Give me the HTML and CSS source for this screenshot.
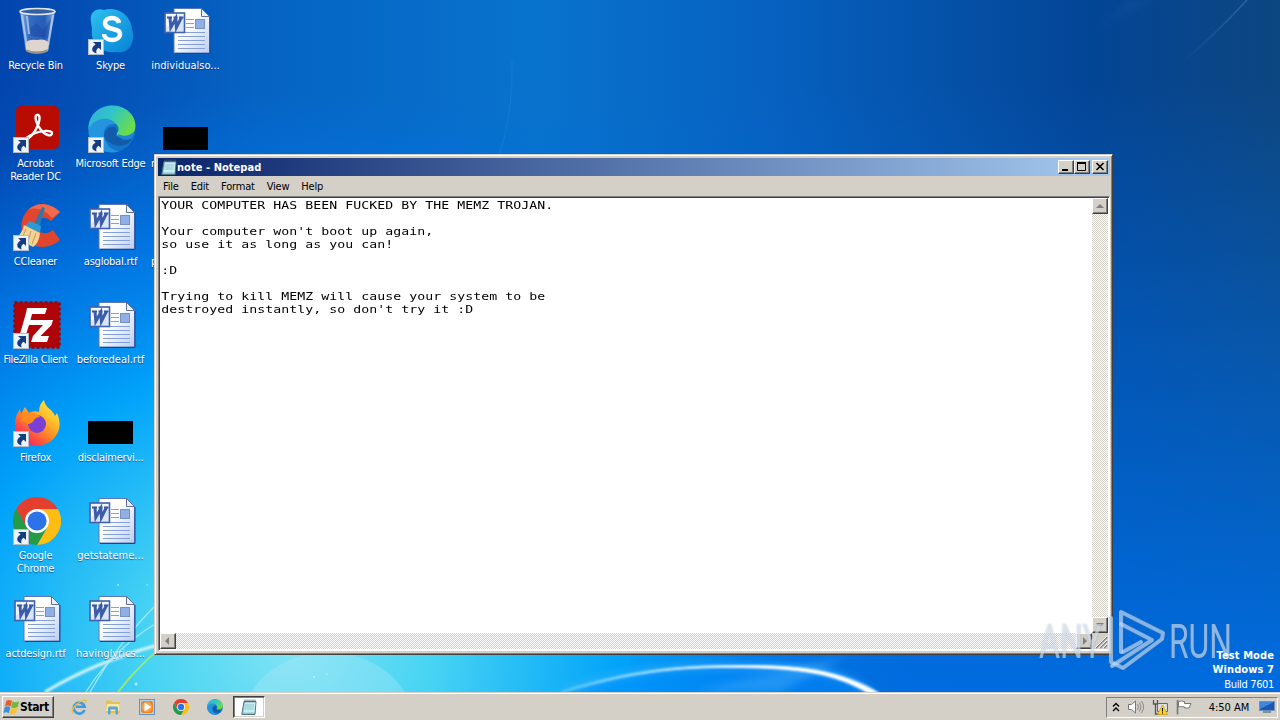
FILE: index.html
```html
<!DOCTYPE html>
<html lang="en">
<head>
    <meta charset="UTF-8">
    <meta name="viewport" content="width=device-width, initial-scale=1.0">
    <title>Desktop</title>
    <link rel="stylesheet" href="styles.css">
</head>
<body>
    <!-- Shared icons -->
    <svg class="defs">
        <defs>
            <linearGradient id="paper" x1="0" y1="0" x2="1" y2="1">
                <stop offset=".4" stop-color="#fff"/><stop offset="1" stop-color="#b9cdf3"/>
            </linearGradient>
            <linearGradient id="skypeFill" x1="0" y1="0" x2="1" y2="1">
                <stop offset="0" stop-color="#2fc0ef"/><stop offset="1" stop-color="#0582d6"/>
            </linearGradient>
            <linearGradient id="edgeTop" x1="0" y1="0" x2="1" y2=".5">
                <stop offset="0" stop-color="#35a9e0"/><stop offset=".5" stop-color="#2fc6c6"/><stop offset="1" stop-color="#6bdc4a"/>
            </linearGradient>
            <linearGradient id="foxFill" x1="1" y1="0" x2=".2" y2="1">
                <stop offset="0" stop-color="#fff04a"/><stop offset=".35" stop-color="#ffc22c"/><stop offset=".58" stop-color="#ff8a24"/><stop offset=".85" stop-color="#ff3d4c"/><stop offset="1" stop-color="#e31587"/>
            </linearGradient>
            <linearGradient id="bin" x1="0" y1="0" x2="1" y2="0">
                <stop offset="0" stop-color="#a9c6ec"/><stop offset=".25" stop-color="#3c74c4"/><stop offset=".7" stop-color="#2b5fb8"/><stop offset="1" stop-color="#9ebce6"/>
            </linearGradient>
        </defs>
        <symbol id="shortcut" viewBox="0 0 16 16">
            <rect x=".5" y=".5" width="15" height="15" fill="#edf3fa" stroke="#b3bdca"/>
            <path d="M5 3h8v8l-2.300-2.300C8.500 10 7.800 11.500 8.500 14.500 3.500 13.500 2.500 8.500 7.600 5.600z" fill="#153d80"/>
        </symbol>
        <symbol id="word" viewBox="0 0 48 48">
            <path d="M11 1.500h27.500l8 8V46H11z" fill="url(#paper)" stroke="#5b78b5"/>
            <path d="M47 10v36.500H12" fill="none" stroke="#20458f"/>
            <path d="M38.500 1.500v8h8z" fill="#eaf0fb" stroke="#5f7196"/>
            <path d="M23 12.500h8M23 16.500h8M23 20.500h8M15 25.500h27M15 29.500h27M15 33.500h27M15 37.500h27M15 41.500h27" stroke="#86a0d2"/>
            <rect x="32.500" y="12.500" width="9" height="9" fill="#8fb0e6" stroke="#7790bd"/>
            <rect x="2" y="6" width="19.500" height="19.500" fill="#dbe5f9" stroke="#3f62ac" stroke-width="1.600"/>
            <path d="M3 7h17.500v5L3 20z" fill="#fff" opacity=".6"/>
            <path d="M4 10.500h5M10.500 10.500h4M16 10.500h4.500" stroke="#31529e" stroke-width="1.800"/>
            <path d="M7 10.500l.8 10 5-9 .6 9 5-10" fill="none" stroke="#3b5ca8" stroke-width="3"/>
        </symbol>
        <symbol id="chrome" viewBox="0 0 48 48">
            <path d="M3.200 12A24 24 0 0 1 44.800 12L24 12 13.600 30z" fill="#e43e2f"/>
            <path d="M44.800 12A24 24 0 0 1 24 48L34.400 30 24 12z" fill="#fdbd12"/>
            <path d="M24 48A24 24 0 0 1 3.200 12L13.600 30 34.400 30z" fill="#259b48"/>
            <circle cx="24" cy="24" r="12" fill="#fff"/>
            <circle cx="24" cy="24" r="9.600" fill="#2c72e8"/>
        </symbol>
        <symbol id="edge" viewBox="0 0 48 48">
            <circle cx="24" cy="24" r="23.500" fill="#1474cc"/>
            <path d="M.5 25C-.5 10 12 0 25 .5 39 1 47.500 11 47.500 20.500 47.500 28 42 32 36 32c-5 0-8-2-7-4 3-3 2-8-4-11C15 13 4 17 .5 25z" fill="url(#edgeTop)"/>
            <path d="M.5 25C4 13 22 10 28 19c-9-1-13 5-12 12 1 8 7 14 15 15.500C14 51 0 39 .5 25z" fill="#2494de"/>
            <path d="M16 31c1-6 5-10 11-9 2 2 2 4 1 7-1 5 10 5 17 0 1 1 .5 3-1 5-5 8-14 8-20 5-4-2-7-5-8-8z" fill="#115ba8"/>
            <path d="M30 29c6 3 11 2 16-2 0 3-1 5-3 7-7 2-12 0-13-5z" fill="#1e82d8"/>
        </symbol>
        <symbol id="notes" viewBox="0 0 16 16">
            <path d="M3 2.500h12l-1 13H.8z" fill="#8fc6d2" stroke="#4d7684"/>
            <path d="M4 3h10.500l-1 10.500H2.500z" fill="#c8eef2"/>
            <path d="M4 6h9M3.700 8h9M3.400 10h9" stroke="#79b4c1" stroke-width=".7"/>
            <path d="M4 .5v3M6 .5v3M8 .5v3M10 .5v3M12 .5v3M14 .5v3" stroke="#48626c" stroke-width=".9"/>
        </symbol>
    </svg>

    <main class="desktop">
        <!-- Wallpaper -->
        <svg class="wallpaper" viewBox="0 0 1280 692" preserveAspectRatio="none">
            <defs>
                <linearGradient id="base" gradientUnits="userSpaceOnUse" x1="0" y1="0" x2="1280" y2="0">
                    <stop offset="0" stop-color="#0345ae"/><stop offset=".2" stop-color="#0563c3"/><stop offset=".42" stop-color="#0873cd"/><stop offset=".6" stop-color="#0661c0"/><stop offset=".85" stop-color="#034596"/><stop offset="1" stop-color="#0d4680"/>
                </linearGradient>
                <linearGradient id="low" x1="0" y1="0" x2="0" y2="1">
                    <stop offset=".12" stop-color="#006cdf" stop-opacity="0"/><stop offset="1" stop-color="#006cdf"/>
                </linearGradient>
                <radialGradient id="glow" gradientUnits="userSpaceOnUse" cx="0" cy="0" r="1" gradientTransform="translate(290 650) scale(640 560)">
                    <stop offset="0" stop-color="#7fe3f5"/><stop offset=".22" stop-color="#48d4f3"/><stop offset=".52" stop-color="#00a2fa"/><stop offset=".75" stop-color="#0080ee" stop-opacity=".7"/><stop offset="1" stop-color="#006fdd" stop-opacity="0"/>
                </radialGradient>
                <linearGradient id="arc"><stop offset="0" stop-color="#54c6ff"/><stop offset=".6" stop-color="#fff"/></linearGradient>
                <linearGradient id="ray" x1="0" y1="1" x2="1" y2="0"><stop offset="0" stop-color="#6fb4ea" stop-opacity="0"/><stop offset="1" stop-color="#6fb4ea" stop-opacity=".3"/></linearGradient>
                <filter id="soft"><feGaussianBlur stdDeviation=".8"/></filter>
                <filter id="softer" x="-20%" y="-40%" width="140%" height="180%"><feGaussianBlur stdDeviation="4"/></filter>
            </defs>
            <rect width="1280" height="692" fill="url(#base)"/>
            <rect width="1280" height="692" fill="url(#low)"/>
            <rect width="1280" height="692" fill="url(#glow)"/>
            <ellipse cx="328" cy="730" rx="88" ry="78" fill="#b9ecf7" opacity=".3"/>
            <path d="M560 692C700 650 830 650 878 692z" fill="#0089fa" opacity=".45"/>
            <path d="M690 692L850 655 780 692z" fill="#69c4ff" opacity=".3" filter="url(#softer)"/>
            <path d="M562 692C640 664 700 664 745 667 800 667 836 668 872 693" fill="none" stroke="#54beff" stroke-width="7" opacity=".4" filter="url(#softer)"/>
            <path d="M562 691C640 667 690 665.500 740 665.500 800 665 840 670 879 693h-11C834 673 800 668.500 740 667.500 690 667 640 669 562 693z" fill="url(#arc)" stroke="url(#arc)" stroke-width=".8" filter="url(#soft)"/>
            <path d="M45 692Q95 662 158 645" fill="none" stroke="#d4f6fd" stroke-width="3" filter="url(#soft)"/>
            <path d="M86 692Q112 650 158 622M90 692Q120 640 158 603" fill="none" stroke="#b4effb" stroke-width="1.300" opacity=".8"/>
            <path d="M118 692Q135 670 158 650" fill="none" stroke="#97ea70" stroke-width="2"/>
            <g fill="#c9f6fd" opacity=".8"><circle cx="118" cy="585" r="1"/><circle cx="147" cy="585" r=".8"/><circle cx="136" cy="684" r="1.500"/><circle cx="314" cy="677" r="1"/><circle cx="327" cy="674" r=".8"/></g>
            <path d="M1180 64Q1215 35 1247 0" fill="none" stroke="url(#ray)" stroke-width="1.500"/>
            <path d="M1068 53Q1105 20 1130 0h25Q1105 20 1068 53z" fill="url(#ray)" opacity=".3" filter="url(#softer)"/>
            <path d="M498 160Q514 110 512 60" fill="none" stroke="#3b95e0" opacity=".25"/>
        </svg>

        <!-- Desktop icons, filled column by column -->
        <div class="icons">
            <div class="icon">
                <svg viewBox="0 0 48 48">
                    <path d="M7 4L12.500 43Q24 49 35.500 43L42 4z" fill="url(#bin)" fill-opacity=".85"/>
                    <ellipse cx="24.500" cy="4.500" rx="17.500" ry="3" fill="#375e9e" stroke="#dfe7f2" stroke-width="1.600"/>
                    <path d="M9 8l5 32M14 9l2 18M40 8l-5 30" stroke="#c5d9f3" stroke-width="2" opacity=".7"/>
                    <path d="M17 21l7-5 6 7 8-12-3 20-17-2z" fill="#173f99" opacity=".4"/>
                    <path d="M12.500 36q3-4 11-3 9-2 12.500 3l-1 8q-11 4-22 0z" fill="#ddd5ce"/>
                    <path d="M12.500 42q11 5 22.500 0l-1 3q-10 4-20 0z" fill="#98918a"/>
                </svg>
                <span>Recycle Bin</span>
            </div>
            <div class="icon">
                <svg viewBox="0 0 48 48">
                    <rect x="3" y="1" width="43" height="43" rx="5" fill="#b80b02"/>
                    <path d="M12 35c4-1 10-7 13-15 3-8 1-11-1-10-3 1-1 9 4 15 5 6 11 7 11 3 0-3-10-3-19 1-7 3-10 7-8 7z" fill="none" stroke="#fff" stroke-width="2.400"/>
                    <use href="#shortcut" x="0" y="32" width="16" height="16"/>
                </svg>
                <span>Acrobat<br>Reader DC</span>
            </div>
            <div class="icon">
                <svg viewBox="0 0 48 48">
                    <path d="M47 9C37-1 23-1 15 7S6 30 14 38s23 8 33-1l-7-10c-7 6-16 3-17-4s8-12 15-5z" fill="#e2452e"/>
                    <path d="M47 9C37-1 23-1 15 7q12-5 24 8z" fill="#f16b4a"/>
                    <path d="M29 4l3 1-6 20-6-2z" fill="#2f78a8"/>
                    <path d="M17 18l11 5-1 7-15-7z" fill="#2b9bd7"/>
                    <path d="M11 22l16 8q-1 10-7 14-8-5-18-8 7-5 9-14z" fill="#f4d291"/>
                    <path d="M13 26l-4 9M18 28l-3 11M23 30l-4 11" stroke="#c99955"/>
                    <use href="#shortcut" x="0" y="32" width="16" height="16"/>
                </svg>
                <span>CCleaner</span>
            </div>
            <div class="icon">
                <svg viewBox="0 0 48 48">
                    <rect x="1.500" y="1.500" width="45" height="45" fill="#b00508" stroke="#a00205" stroke-width="2.500" stroke-dasharray="3 2"/>
                    <path d="M14 7h20l-2 6H19l-1.500 6H28l-2 5H16l-5 16H5L13 12z" fill="#fff"/>
                    <path d="M23 19h17l-1.500 5-11 11H36l-2 6H18l2-6 10-11h-8z" fill="#fff"/>
                    <use href="#shortcut" x="0" y="32" width="16" height="16"/>
                </svg>
                <span class="tight">FileZilla Client</span>
            </div>
            <div class="icon">
                <svg viewBox="0 0 48 48">
                    <path d="M24 46.500C10 46.500 2 36 2 25c0-7 3-12 5-15l1 5 4-7 4 6q5-3 10-1 0-8 5-12 1 6 7 10 2 2 4 6l2-3c3 7 4 14 0 21-4 7-11 11.500-20 11.500z" fill="url(#foxFill)"/>
                    <circle cx="24" cy="25" r="9" fill="#7b3fd6"/>
                    <path d="M13 14q9-2 14 4-4 0-6 3-1 3-6 4-4-4-8-2 2-5 6-9z" fill="#ff8c1e"/>
                    <use href="#shortcut" x="0" y="32" width="16" height="16"/>
                </svg>
                <span>Firefox</span>
            </div>
            <div class="icon">
                <svg viewBox="0 0 48 48">
                    <use href="#chrome"/>
                    <use href="#shortcut" x="0" y="32" width="16" height="16"/>
                </svg>
                <span>Google<br>Chrome</span>
            </div>
            <div class="icon">
                <svg viewBox="0 0 48 48"><use href="#word"/></svg>
                <span>actdesign.rtf</span>
            </div>

            <div class="icon">
                <svg viewBox="0 0 48 48">
                    <path d="M3 15C1 6 8 0 16 3c13-4 27 5 28 19 4 13-3 26-16 23C13 47 2 36 4 22z" fill="url(#skypeFill)"/>
                    <path d="M31 16c-1-4-4-5-7-5-4 0-7 2-7 5 0 8 15 4 15 11 0 4-4 6-8 6-5 0-8-3-8-6" fill="none" stroke="#fff" stroke-width="4.500"/>
                    <use href="#shortcut" x="0" y="32" width="16" height="16"/>
                </svg>
                <span>Skype</span>
            </div>
            <div class="icon">
                <svg viewBox="0 0 48 48">
                    <use href="#edge"/>
                    <use href="#shortcut" x="0" y="32" width="16" height="16"/>
                </svg>
                <span>Microsoft Edge</span>
            </div>
            <div class="icon">
                <svg viewBox="0 0 48 48"><use href="#word"/></svg>
                <span>asglobal.rtf</span>
            </div>
            <div class="icon">
                <svg viewBox="0 0 48 48"><use href="#word"/></svg>
                <span class="wide">beforedeal.rtf</span>
            </div>
            <div class="icon">
                <svg viewBox="0 0 48 48"><path d="M0 22h45v23H0z"/></svg>
                <span>disclaimervi...</span>
            </div>
            <div class="icon">
                <svg viewBox="0 0 48 48"><use href="#word"/></svg>
                <span class="wide">getstateme...</span>
            </div>
            <div class="icon">
                <svg viewBox="0 0 48 48"><use href="#word"/></svg>
                <span class="wide">havinglyrics...</span>
            </div>

            <div class="icon">
                <svg viewBox="0 0 48 48"><use href="#word"/></svg>
                <span class="wide">individualso...</span>
            </div>
            <div class="icon">
                <svg viewBox="0 0 48 48"><path d="M0 22h45v23H0z"/></svg>
                <span class="hidden-label">r</span>
            </div>
            <div class="icon">
                <svg viewBox="0 0 48 48"></svg>
                <span class="hidden-label">p</span>
            </div>
        </div>

        <!-- Notepad window -->
        <section class="window">
            <header class="titlebar">
                <svg class="app-icon" viewBox="0 0 16 16"><use href="#notes"/></svg>
                <span class="title">note - Notepad</span>
                <div class="controls">
                    <button class="bevel"><svg viewBox="0 0 12 10"><path d="M2 8h6" stroke="#000" stroke-width="2"/></svg></button>
                    <button class="bevel"><svg viewBox="0 0 12 10"><path d="M1.500 1.500h8v7h-8z" fill="none" stroke="#000"/><path d="M1 1h9" stroke="#000" stroke-width="2"/></svg></button>
                    <button class="bevel close"><svg viewBox="0 0 12 10"><path d="M2.500 1l7 7M9.500 1l-7 7" stroke="#000" stroke-width="1.600"/></svg></button>
                </div>
            </header>
            <nav class="menu">
                <span>File</span><span>Edit</span><span>Format</span><span>View</span><span>Help</span>
            </nav>
            <div class="client">
                <pre class="text">YOUR COMPUTER HAS BEEN FUCKED BY THE MEMZ TROJAN.

Your computer won't boot up again,
so use it as long as you can!

:D

Trying to kill MEMZ will cause your system to be
destroyed instantly, so don't try it :D</pre>
                <div class="scroll vertical">
                    <button class="bevel"><svg viewBox="0 0 12 12"><path d="M2 8h8L6 4z" fill="#808080"/></svg></button>
                    <button class="bevel"><svg viewBox="0 0 12 12"><path d="M2 4h8L6 8z" fill="#808080"/></svg></button>
                </div>
                <div class="scroll horizontal">
                    <button class="bevel"><svg viewBox="0 0 12 12"><path d="M7 2v8L3 6z" fill="#808080"/></svg></button>
                    <button class="bevel"><svg viewBox="0 0 12 12"><path d="M5 2v8l4-4z" fill="#808080"/></svg></button>
                </div>
                <svg class="grip" viewBox="0 0 16 16"><path d="M4 15L15 4M8 15l7-7M12 15l3-3" stroke="#808080" stroke-width="1.600"/><path d="M3 15L15 3M7 15l8-8M11 15l4-4" stroke="#fff" stroke-width=".8"/></svg>
            </div>
        </section>

        <!-- Overlay logo -->
        <svg class="watermark" viewBox="0 0 200 64">
            <g class="logo-text">
                <text x="3" y="50" textLength="63" lengthAdjust="spacingAndGlyphs">ANY</text>
                <text x="133" y="50" textLength="63" lengthAdjust="spacingAndGlyphs">RUN</text>
            </g>
            <g class="logo-mark">
                <path d="M85 44V4L127 25 126 31 87 60 75 54V10"/>
                <path d="M85 16L116 32 76 58M87 44L105 34"/>
            </g>
        </svg>

        <div class="build">
            <b>Test Mode</b>
            <b>Windows 7</b>
            <span>Build 7601</span>
        </div>
    </main>

    <footer class="taskbar">
        <button class="start bevel">
            <svg viewBox="0 0 18 16">
                <path d="M3.500 1.500q3-2 6 0L8 7.500q-3-2-6 0z" fill="#ec5a2b"/>
                <path d="M10.200 2q3 2 7 0L15.500 8q-3.500 2-7 0z" fill="#72b83c"/>
                <path d="M1.800 8.200q3-2 6 0L6.200 14.500q-3-2-6 0z" fill="#3f8fd8"/>
                <path d="M8.500 8.700q3 2 6.800 0L13.600 15q-3.500 2-6.800 0z" fill="#fbc32d"/>
            </svg>
            <span>Start</span>
        </button>
        <div class="quick">
            <svg viewBox="0 0 16 16">
                <path d="M13.500 11A5.500 5.500 0 1 1 13.700 7.800H5" fill="none" stroke="#3d9be0" stroke-width="2.600"/>
                <path d="M2 14.500C-1 12 5 5 9.500 2.500 14 0 16 1 14.500 4" fill="none" stroke="#edbd35" stroke-width="1.300"/>
            </svg>
            <svg viewBox="0 0 16 16">
                <path d="M1 3V1.500h5L7.500 3H15v11H1z" fill="#e3c05c"/>
                <path d="M2 5h12.500v7H1z" fill="#f8e8a4"/>
                <path d="M3 15.500V9q0-1.500 2-1.500h6q2 0 2 1.500v6.500h-2.500v-5h-5v5z" fill="#5aa6da"/>
            </svg>
            <svg viewBox="0 0 16 16">
                <rect x=".5" y=".5" width="15" height="15" fill="#b7d6ef" stroke="#5f93c7"/>
                <rect x="2" y="2" width="12" height="12" rx="2" fill="#f48419"/>
                <circle cx="8" cy="8" r="5" fill="#fff" opacity=".25"/>
                <path d="M5.500 3.500L12 8l-6.500 4.500z" fill="#fff"/>
            </svg>
            <svg viewBox="0 0 16 16"><use href="#chrome"/></svg>
            <svg viewBox="0 0 16 16"><use href="#edge"/></svg>
        </div>
        <div class="task"><svg viewBox="0 0 16 16"><use href="#notes"/></svg></div>
        <div class="tray">
            <svg class="chevron" viewBox="0 0 8 10"><path d="M1 4.500L4 1.500l3 3M1 9l3-3 3 3" fill="none" stroke="#000" stroke-width="1.400"/></svg>
            <svg viewBox="0 0 16 16">
                <path d="M.5 5.500h3L7.500 2v12l-4-3.500h-3z" fill="#fff" stroke="#777"/>
                <path d="M9.500 5q2 3 0 6M11.500 3.500q3 4.500 0 9M13.500 2q4 6 0 12" fill="none" stroke="#888"/>
            </svg>
            <svg viewBox="0 0 16 16">
                <path d="M5.500 4.500h10v8h-10z" fill="#ddd" stroke="#666"/>
                <path d="M1.500 1v4h4V1M3.500 5v10h5" fill="none" stroke="#555" stroke-width="1.300"/>
                <path d="M10.500 6l5 9.500h-10z" fill="#ffd51c" stroke="#c89a00" stroke-width=".7"/>
                <path d="M10.500 9v3.500M10.500 13.300v1.200" stroke="#000"/>
            </svg>
            <svg viewBox="0 0 16 16">
                <path d="M1.500 1v14.500" stroke="#777" stroke-width="1.600"/>
                <path d="M2.500 2.500q3-1 6 0v2h6.500l-2 4.500H8.500V8q-3-1-6 0z" fill="#fff" stroke="#777"/>
            </svg>
            <span class="clock">4:50 AM</span>
            <svg viewBox="0 0 16 16">
                <path d="M.5 2.500h15v9H.5z" fill="#1d56b4" stroke="#6d8fb8"/>
                <path d="M1 3h14L1 10z" fill="#3f86dd"/>
                <path d="M4 13h8" stroke="#6b7886" stroke-width="1.500"/>
            </svg>
        </div>
    </footer>
</body>
</html>
```

FILE: styles.css
```css
/* Page */
* {
    box-sizing: border-box;
}
body {
    margin: 0;
    width: 1280px;
    height: 720px;
    overflow: hidden;
    display: flex;
    flex-direction: column;
    font-family: "DejaVu Sans Condensed", "DejaVu Sans", sans-serif;
    font-stretch: condensed;
    font-size: 11px;
    color: #000;
}
svg {
    display: block;
    flex: none;
}
button {
    padding: 0;
    font: inherit;
}
.defs {
    position: absolute;
    width: 0;
    height: 0;
}
.bevel {
    background: #d4d0c8;
    border: 1px solid;
    border-color: #fff #404040 #404040 #fff;
    box-shadow: inset -1px -1px #808080;
}

/* Desktop */
.desktop {
    position: relative;
    height: 692px;
    overflow: hidden;
}
.wallpaper {
    position: absolute;
    width: 1280px;
    height: 692px;
}
.icons {
    position: relative;
    display: grid;
    grid-template-rows: repeat(7, 98px);
    grid-auto-flow: column;
    grid-auto-columns: 75px;
    justify-content: start;
    padding-top: 7px;
    margin-left: -2px;
}
.icon {
    display: flex;
    flex-direction: column;
    align-items: center;
    gap: 4px;
    color: #fff;
    line-height: 13px;
    text-align: center;
    white-space: nowrap;
    letter-spacing: -0.22px;
    text-shadow: 0 1px 1px rgba(0, 30, 90, 0.6);
}
.icon svg {
    width: 48px;
    height: 48px;
    margin-left: 3px;
}
.tight {
    letter-spacing: -0.35px;
}
.wide {
    letter-spacing: 0;
}
.hidden-label {
    align-self: flex-start;
    padding-left: 3px;
}

/* Notepad window */
.window {
    position: absolute;
    left: 154px;
    top: 154px;
    width: 959px;
    height: 501px;
    display: flex;
    flex-direction: column;
    padding: 3px 2px 3px 3px;
    background: #d4d0c8;
    border: 1px solid;
    border-color: #d4d0c8 #404040 #404040 #d4d0c8;
    box-shadow: inset 1px 1px #fff, inset -1px -1px #808080;
}
.titlebar {
    height: 18px;
    display: flex;
    align-items: center;
    padding: 0 2px 0 3px;
    background: linear-gradient(to right, #0a246a, #a6caf0);
    color: #fff;
}
.app-icon {
    width: 16px;
    height: 16px;
}
.title {
    font-weight: bold;
    letter-spacing: 0.05px;
}
.controls {
    margin-left: auto;
    display: flex;
}
.controls button {
    width: 16px;
    height: 14px;
    display: flex;
    justify-content: center;
}
.controls svg {
    width: 12px;
    height: 10px;
    margin-top: 1px;
}
.controls .close {
    margin-left: 2px;
}
.menu {
    height: 20px;
    display: flex;
    align-items: center;
    gap: 12px;
    padding-left: 5px;
    letter-spacing: -0.2px;
}
.client {
    flex: 1;
    display: grid;
    grid-template: 1fr 16px / 1fr 16px;
    background: #fff;
    border: 1px solid;
    border-color: #808080 #fff #fff #808080;
    box-shadow: inset 1px 1px #404040;
    padding: 1px;
}
/* narrow monospace stretched to 8px cells */
.text {
    margin: 0;
    padding: 1px 0 0 1px;
    width: 80%;
    font: 11px/13px "DejaVu Sans Mono", monospace;
    letter-spacing: 0.045px;
    transform: scaleX(1.2);
    transform-origin: 0 0;
}
.scroll {
    display: flex;
    justify-content: space-between;
    background: repeating-conic-gradient(#fff 0 25%, #d4d0c8 0 50%) 0 0 / 2px 2px;
}
.scroll button {
    width: 16px;
    height: 16px;
    padding: 1px;
}
.scroll svg {
    width: 12px;
    height: 12px;
}
.vertical {
    flex-direction: column;
}
.grip {
    width: 16px;
    height: 16px;
    background: #d4d0c8;
}

/* Overlays in the lower right corner */
.watermark {
    position: absolute;
    left: 1036px;
    top: 608px;
    width: 200px;
    height: 64px;
    font: 400 49px Roboto, sans-serif;
    filter: drop-shadow(0 0 1px rgba(90, 110, 140, 0.5));
}
.logo-text {
    fill: #dfe9f5;
    fill-opacity: 0.6;
}
.logo-mark {
    fill: none;
    stroke: #c3dcf6;
    stroke-opacity: 0.65;
    stroke-width: 4;
    stroke-linejoin: round;
    stroke-linecap: round;
}
.build {
    position: absolute;
    right: 6px;
    top: 649px;
    display: flex;
    flex-direction: column;
    align-items: flex-end;
    line-height: 14px;
    color: #fff;
}
.build b {
    letter-spacing: 0.1px;
}
.build span {
    margin-top: 1px;
    letter-spacing: -0.35px;
}

/* Taskbar */
.taskbar {
    height: 28px;
    display: flex;
    align-items: center;
    padding: 3px 2px 1px;
    background: #d4d0c8;
    box-shadow: inset 0 1px #d4d0c8, inset 0 2px #fff;
}
.start {
    width: 52px;
    height: 22px;
    display: flex;
    align-items: center;
    font-size: 12px;
    font-weight: bold;
    letter-spacing: -0.4px;
}
.start svg {
    width: 17px;
    height: 16px;
}
.quick {
    display: flex;
    gap: 18px;
    margin-left: 17px;
}
.quick svg, .task svg {
    width: 16px;
    height: 16px;
}
.task {
    width: 32px;
    height: 22px;
    margin-left: 10px;
    display: flex;
    align-items: center;
    justify-content: center;
    background: #fff;
    border: 1px solid;
    border-color: #404040 #fff #fff #404040;
    box-shadow: inset 1px 1px #808080, inset -1px -1px #d4d0c8;
}
.tray {
    margin-left: auto;
    width: 172px;
    height: 21px;
    display: flex;
    align-items: center;
    gap: 8px;
    padding: 0 2px 0 5px;
    border: 1px solid;
    border-color: #808080 #fff #fff #808080;
}
.tray svg {
    width: 16px;
    height: 16px;
}
.tray .chevron {
    width: 8px;
    height: 10px;
}
.clock {
    flex: 1;
    padding-left: 7px;
    text-align: center;
    white-space: nowrap;
}
```
